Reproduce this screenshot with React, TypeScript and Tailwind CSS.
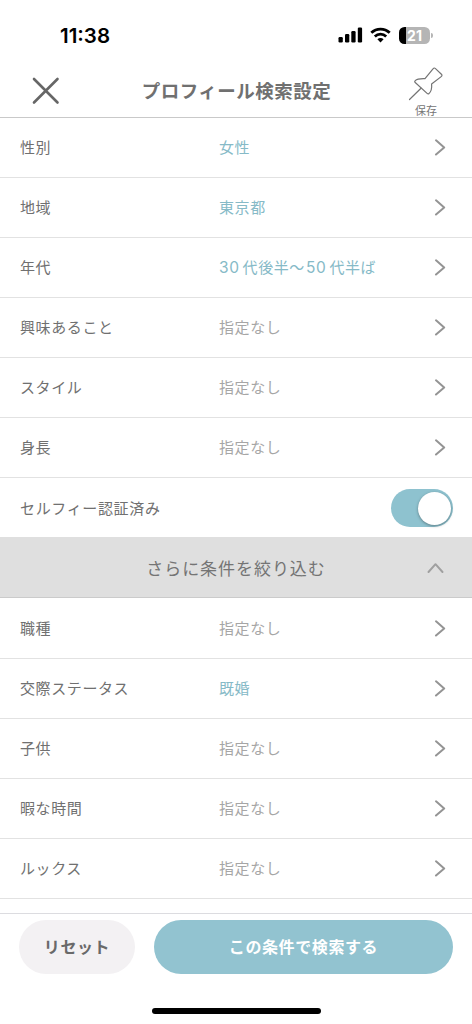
import { useState } from 'react';

type Condition = {
  label: string;
  value?: string;
};

const basicConditions: Condition[] = [
  { label: '性別', value: '女性' },
  { label: '地域', value: '東京都' },
  { label: '年代', value: '30代後半〜50代半ば' },
  { label: '興味あること' },
  { label: 'スタイル' },
  { label: '身長' },
];

const detailConditions: Condition[] = [
  { label: '職種' },
  { label: '交際ステータス', value: '既婚' },
  { label: '子供' },
  { label: '暇な時間' },
  { label: 'ルックス' },
];

function StatusBar() {
  return (
    <div className="flex h-[66px] shrink-0 items-center justify-between pl-[60px] pr-[39px] pt-1">
      <span className="mt-px font-['Inter'] text-[20.5px] font-semibold leading-6 text-black">11:38</span>
      <div className="flex items-center">
        <svg width="25" height="16" viewBox="0 0 25 16">
          <rect x="0.5" y="10" width="4.3" height="5.5" rx="1.2" />
          <rect x="7" y="7" width="4.3" height="8.5" rx="1.2" />
          <rect x="13.3" y="4" width="4.3" height="11.5" rx="1.2" />
          <rect x="19.8" y="0.5" width="4.3" height="15" rx="1.2" />
        </svg>
        <svg width="21" height="16" viewBox="0 0 21 16" className="ml-[7px]" fill="none" stroke="#000" strokeWidth="2.8">
          <path d="M1.3 5.8C6.5 0.8 14.5 0.8 19.7 5.8" />
          <path d="M4.8 9.4C8 6.4 13 6.4 16.2 9.4" />
          <path d="M10.5 15.4L7.4 12.2C9.2 10.7 11.8 10.7 13.6 12.2Z" fill="#000" stroke="none" />
        </svg>
        <div className="ml-[8px] flex h-[17px] w-[31px] items-center justify-center overflow-hidden rounded-[5.5px] bg-[linear-gradient(90deg,#000_7px,#b5b5b5_7px)]">
          <span className="font-['Inter'] text-[14px] font-bold leading-[17px] text-white">21</span>
        </div>
        <div className="ml-px h-[5px] w-[2px] rounded-r-full bg-[#b5b5b5]" />
      </div>
    </div>
  );
}

function Header() {
  return (
    <header className="flex h-[52px] shrink-0 justify-between border-b border-[#c9c9c9] pl-[32px] pr-[27px]">
      <button aria-label="閉じる" className="mt-[11px] h-[28px] w-[28px]">
        <svg width="28" height="28" viewBox="0 0 28 28" fill="none" stroke="#666" strokeWidth="2.6" strokeLinecap="round">
          <path d="M2 2L25.5 25.5M25.5 2L2 25.5" />
        </svg>
      </button>
      <h1 className="mt-[11px] pl-[6px] text-[18.5px] font-bold leading-[26px] tracking-[0.5px] text-[#707070]">プロフィール検索設定</h1>
      <button className="flex w-[38px] flex-col items-center">
        <svg width="38" height="36" viewBox="0 0 38 36" className="shrink-0" fill="none" stroke="#747474" strokeWidth="1.2" strokeLinejoin="round" strokeLinecap="round">
          <path d="M2.5 33.5L14 22.2" />
          <path d="M8.2 14.7C10.5 12.3 14 12.5 18 12.6L26.2 2.7Q27.2 1.4 28.5 2.6L34.4 8.2Q35.6 9.5 34.2 10.6L24.6 17.9C25 22 24.6 25.4 21.8 27.7Q21 28.3 20.1 27.4L8.2 16.5Q7.2 15.6 8.2 14.7Z" />
        </svg>
        <span className="mt-[2px] text-[11px] leading-[12px] text-[#757575]">保存</span>
      </button>
    </header>
  );
}

function ConditionValue({ value }: { value?: string }) {
  if (!value) {
    return <span className="text-[#a6a6a6]">指定なし</span>;
  }

  // digits get a little air before the kanji that follows
  return (
    <span className="text-[#86bac7]">
      {value.split(/(\d+)/).map((part, i) =>
        /^\d+$/.test(part) ? (
          <span key={i} className="mr-[3px] font-['Inter'] text-[15.5px] tracking-[0.6px] last-of-type:ml-px">{part}</span>
        ) : (
          part
        )
      )}
    </span>
  );
}

function ConditionRow({ label, value }: Condition) {
  return (
    <button className="flex h-[60px] w-full shrink-0 items-center border-b border-[#e2e2e2] pl-[20px] pr-[26px] text-left text-[15px] tracking-[0.6px]">
      <span className="w-[199px] text-[#707070]">{label}</span>
      <span className="flex-1">
        <ConditionValue value={value} />
      </span>
      <svg width="12" height="18" viewBox="0 0 12 18" fill="none" stroke="#949494" strokeWidth="2" strokeLinecap="round" strokeLinejoin="round">
        <path d="M2 1.3L10.2 8.4L2 15.5" />
      </svg>
    </button>
  );
}

export default function App() {
  const [verified, setVerified] = useState(true);
  const [expanded, setExpanded] = useState(true);

  return (
    <div className="flex h-[1024px] w-[472px] flex-col overflow-hidden bg-white font-['Noto_Sans_CJK_JP',sans-serif]">
      <StatusBar />
      <Header />

      <main className="flex h-[795px] shrink-0 flex-col overflow-hidden">
        {basicConditions.map((condition) => (
          <ConditionRow key={condition.label} {...condition} />
        ))}

        <div className="flex h-[59px] shrink-0 items-center justify-between pl-[20px] pr-[19px]">
          <span className="mt-px text-[15px] tracking-[0.65px] text-[#707070]">セルフィー認証済み</span>
          <button
            role="switch"
            aria-checked={verified}
            aria-label="セルフィー認証済み"
            onClick={() => setVerified(!verified)}
            className={`mt-px flex h-[38px] w-[62px] items-center rounded-full px-[2px] ${
              verified ? 'justify-end bg-[#8ec2cf]' : 'justify-start bg-[#d5d5d5]'
            }`}
          >
            <span className="h-[33px] w-[33px] rounded-full bg-white shadow-[0_1px_3px_rgba(0,0,0,0.35)]" />
          </button>
        </div>

        <button
          onClick={() => setExpanded(!expanded)}
          className="flex h-[61px] shrink-0 items-center border-b border-[#cbcbcb] bg-[#dfdfdf] pl-[20px] pr-[28px]"
        >
          <span className="mt-px flex-1 pl-[25px] text-center text-[17px] tracking-[0.95px] text-[#747474]">さらに条件を絞り込む</span>
          <svg width="17" height="12" viewBox="0 0 17 12" className={expanded ? 'mt-px' : 'rotate-180'} fill="none" stroke="#a0a0a0" strokeWidth="2" strokeLinecap="round" strokeLinejoin="round">
            <path d="M1.5 10L8.5 2.2L15.5 10" />
          </svg>
        </button>

        <div className="pt-px">
          {expanded && detailConditions.map((condition) => <ConditionRow key={condition.label} {...condition} />)}
        </div>
      </main>

      <footer className="flex flex-1 flex-col items-center border-t border-[#dcdce0] pt-[6px]">
        <div className="flex w-full gap-[19px] pl-[19px] pr-[19px] text-[16px] font-bold tracking-[0.6px]">
          <button className="h-[54px] w-[116px] rounded-full bg-[#f3f1f3] pb-[2px] text-[#696969]">リセット</button>
          <button className="h-[54px] flex-1 rounded-full bg-[#92c3d0] pb-[2px] text-white">この条件で検索する</button>
        </div>
        <div className="mt-[34px] h-[6px] w-[169px] rounded-full bg-black" />
      </footer>
    </div>
  );
}
